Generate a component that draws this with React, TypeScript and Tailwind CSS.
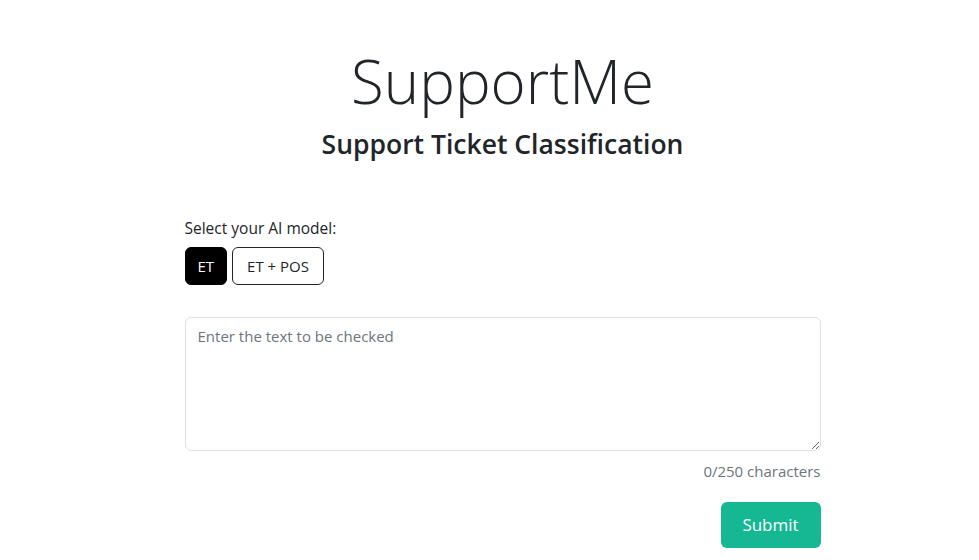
import { useState } from 'react'

const models = ['ET', 'ET + POS']

export default function App() {
  const [model, setModel] = useState('ET')
  const [text, setText] = useState('')

  return (
    <div className="min-h-[560px] bg-white pl-[26px] font-['Open_Sans',sans-serif] text-[#212529]">
      <div className="mx-auto w-[636px]">
        <header className="pt-[45px] text-center">
          <h1 className="text-[60px] font-light leading-[72px]">SupportMe</h1>
          <h3 className="mt-[11px] text-[26.5px] font-semibold leading-8">Support Ticket Classification</h3>
        </header>

        <div className="mt-[56px]">
          <p className="text-[15.5px] leading-6">Select your AI model:</p>
          <div className="mt-[7px] flex gap-[5px]">
            {models.map((m) => (
              <button
                key={m}
                onClick={() => setModel(m)}
                className={
                  model === m
                    ? 'h-[38px] rounded-md border border-black bg-black px-3 text-[15px] text-white'
                    : 'h-[38px] rounded-md border border-[#212529] bg-white px-[14px] text-[15px] text-[#212529]'
                }
              >
                {m}
              </button>
            ))}
          </div>
        </div>

        <textarea
          value={text}
          maxLength={250}
          onChange={(e) => setText(e.target.value)}
          placeholder="Enter the text to be checked"
          className="mt-8 block h-[134px] w-full rounded-md border border-[#dee2e6] px-3 py-[6px] text-[15px] leading-6 outline-none placeholder:text-[#6c757d]"
        />
        <p className="mt-[8px] text-right text-[15px] leading-6 text-[#6c757d]">{text.length}/250 characters</p>

        <div className="mt-[19px] flex justify-end">
          <button className="h-[46px] w-[100px] rounded-md bg-[#16b793] text-[17px] text-white">Submit</button>
        </div>
      </div>
    </div>
  )
}
